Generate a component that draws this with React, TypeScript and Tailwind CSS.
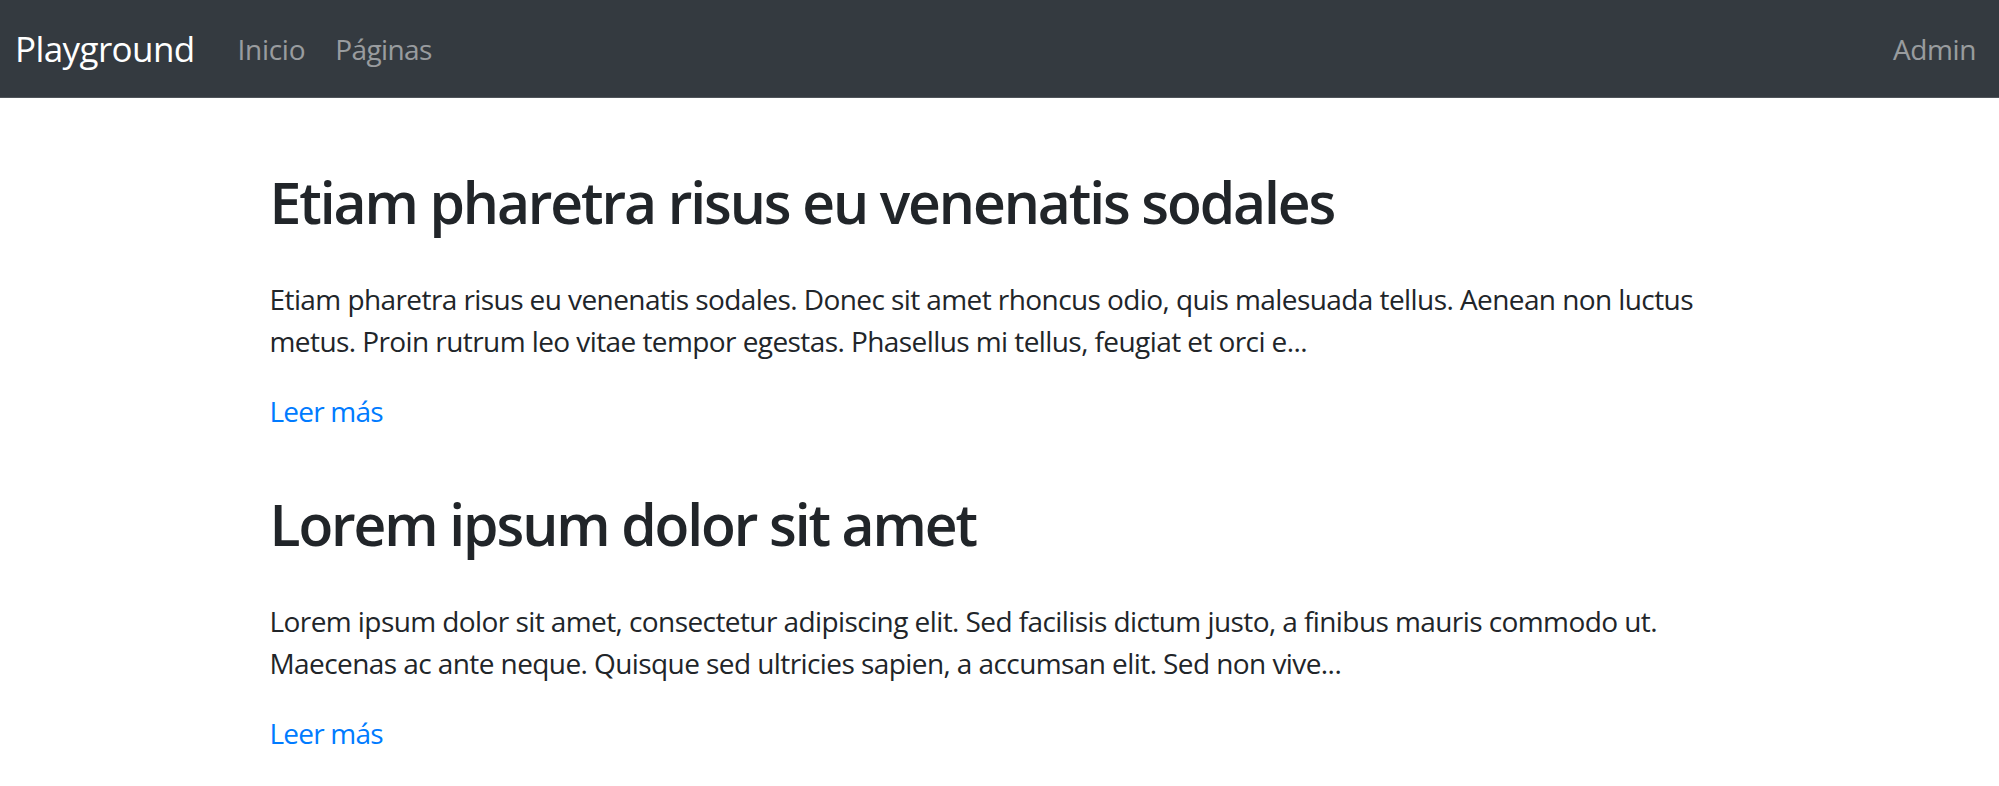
import React from "react";

const posts = [
    {
        title: "Etiam pharetra risus eu venenatis sodales",
        excerpt:
            "Etiam pharetra risus eu venenatis sodales. Donec sit amet rhoncus odio, quis malesuada tellus. Aenean non luctus metus. Proin rutrum leo vitae tempor egestas. Phasellus mi tellus, feugiat et orci e...",
    },
    {
        title: "Lorem ipsum dolor sit amet",
        excerpt:
            "Lorem ipsum dolor sit amet, consectetur adipiscing elit. Sed facilisis dictum justo, a finibus mauris commodo ut. Maecenas ac ante neque. Quisque sed ultricies sapien, a accumsan elit. Sed non vive...",
    },
];

export default function App() {
    return (
        <div className="min-h-screen bg-white font-['Open_Sans',sans-serif] text-[#212529]">
            <nav className="h-[98px] bg-[#343a40] border-b border-[#4f545a] flex items-center pl-[15px] pr-[23px]">
                <a href="#" className="text-[35px] leading-[52px] tracking-[-0.6px] text-white">
                    Playground
                </a>
                <div className="flex items-center ml-[43px] gap-[30px]">
                    <a href="#" className="text-[28px] leading-[42px] tracking-[-0.3px] text-white/50">
                        Inicio
                    </a>
                    <a href="#" className="text-[28px] leading-[42px] tracking-[-0.6px] text-white/50">
                        Páginas
                    </a>
                </div>
                <a href="#" className="ml-auto text-[28px] leading-[42px] tracking-[-0.4px] text-white/50">
                    Admin
                </a>
            </nav>

            <main className="max-w-[1460px] mx-auto pt-[68px]">
                {posts.map((post, i) => (
                    <article key={i} className="mb-[56px]">
                        <h1 className="text-[57px] leading-[72px] font-semibold tracking-[-2.1px] mb-[40px]">
                            {post.title}
                        </h1>
                        <p className="text-[28px] leading-[42px] tracking-[-0.58px] mb-[28px]">{post.excerpt}</p>
                        <a href="#" className="block text-[28px] leading-[42px] tracking-[-0.8px] text-[#007bff]">
                            Leer más
                        </a>
                    </article>
                ))}
            </main>
        </div>
    );
}
